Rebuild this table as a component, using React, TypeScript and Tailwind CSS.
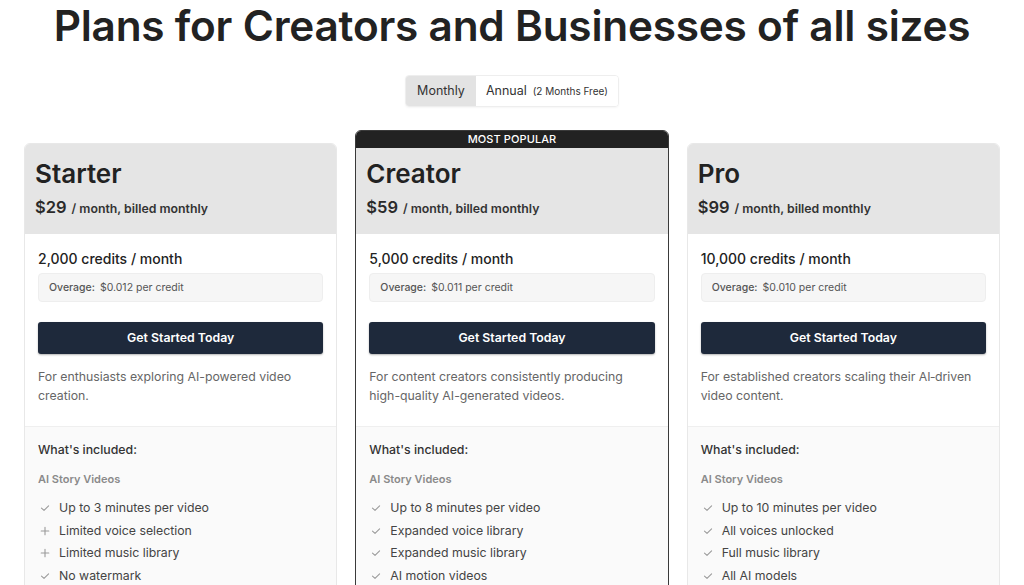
import React from "react";

type Feature = { text: string; icon: "check" | "plus" };
type Plan = {
  name: string;
  price: string;
  credits: string;
  overage: string;
  desc: string;
  features: Feature[];
  popular?: boolean;
};

const plans: Plan[] = [
  {
    name: "Starter",
    price: "$29",
    credits: "2,000 credits / month",
    overage: "$0.012 per credit",
    desc: "For enthusiasts exploring AI-powered video creation.",
    features: [
      { text: "Up to 3 minutes per video", icon: "check" },
      { text: "Limited voice selection", icon: "plus" },
      { text: "Limited music library", icon: "plus" },
      { text: "No watermark", icon: "check" },
    ],
  },
  {
    name: "Creator",
    price: "$59",
    credits: "5,000 credits / month",
    overage: "$0.011 per credit",
    desc: "For content creators consistently producing high-quality AI-generated videos.",
    popular: true,
    features: [
      { text: "Up to 8 minutes per video", icon: "check" },
      { text: "Expanded voice library", icon: "check" },
      { text: "Expanded music library", icon: "check" },
      { text: "AI motion videos", icon: "check" },
    ],
  },
  {
    name: "Pro",
    price: "$99",
    credits: "10,000 credits / month",
    overage: "$0.010 per credit",
    desc: "For established creators scaling their AI\u2011driven video content.",
    features: [
      { text: "Up to 10 minutes per video", icon: "check" },
      { text: "All voices unlocked", icon: "check" },
      { text: "Full music library", icon: "check" },
      { text: "All AI models", icon: "check" },
    ],
  },
];

function Icon({ kind }: { kind: "check" | "plus" }) {
  if (kind === "check") {
    return (
      <svg width="10" height="10" viewBox="0 0 10 10" className="shrink-0">
        <path d="M1.5 5.2 L4 7.4 L8.6 2.8" fill="none" stroke="#9a9a9a" strokeWidth="1.1" strokeLinecap="round" strokeLinejoin="round" />
      </svg>
    );
  }
  return (
    <svg width="10" height="10" viewBox="0 0 10 10" className="shrink-0">
      <path d="M5 1.2 V8.8 M1.2 5 H8.8" fill="none" stroke="#9a9a9a" strokeWidth="1.1" strokeLinecap="round" />
    </svg>
  );
}

function Card({ plan }: { plan: Plan }) {
  return (
    <div className={plan.popular ? "flex flex-col" : "flex flex-col pt-[13px]"}>
      <div
        className={
          plan.popular
            ? "flex flex-col rounded-t-[6px] border border-[#3a3a3a] overflow-hidden h-[460px]"
            : "flex flex-col rounded-t-[6px] border border-[#e8e8e8] overflow-hidden h-[447px]"
        }
      >
        {plan.popular && (
          <div className="h-[17px] bg-[#222222] text-white text-[11px] font-medium flex items-center justify-center tracking-[0.1px]">
            MOST POPULAR
          </div>
        )}
        <div
          className={
            plan.popular
              ? "bg-[#e5e5e5] h-[86px] px-[10px] pt-[10px]"
              : "bg-[#e5e5e5] h-[90px] px-[10px] pt-[14px]"
          }
        >
          <div className="text-[26px] leading-[32px] font-semibold text-[#222222]">{plan.name}</div>
          <div className="mt-[5px] flex items-baseline text-[#2a2a2a]">
            <span className="text-[16.5px] font-semibold">{plan.price}</span>
            <span className="ml-[5px] text-[12.3px] font-semibold text-[#333333]">/ month, billed monthly</span>
          </div>
        </div>
        <div className="bg-white px-[13px] pt-[16px] h-[193px] border-b border-[#efefef]">
          <div className="text-[14px] leading-[18px] font-medium text-[#222222]">{plan.credits}</div>
          <div className="mt-[5px] h-[29px] rounded-[4px] bg-[#f6f6f6] border border-[#eeeeee] flex items-center px-[10px] text-[10.5px] text-[#555555]">
            <span className="font-medium">Overage:</span>
            <span className="ml-[5px]">{plan.overage}</span>
          </div>
          <button className="mt-[20px] w-full h-[32px] rounded-[3px] bg-[#1e293b] text-white text-[12.3px] font-semibold shadow-[0_1px_2px_rgba(0,0,0,0.3)]">
            Get Started Today
          </button>
          <p className="mt-[13px] text-[12.3px] leading-[19px] text-[#666666]">{plan.desc}</p>
        </div>
        <div className="flex-1 bg-[#fafafa] px-[13px] pt-[15px]">
          <div className="text-[12.3px] font-medium text-[#333333] leading-[16px]">What's included:</div>
          <div className="mt-[14px] text-[11px] font-semibold text-[#8a8a8a] leading-[14px]">AI Story Videos</div>
          <ul className="mt-[11px] flex flex-col">
            {plan.features.map((f) => (
              <li key={f.text} className="flex items-center h-[22.5px] text-[12.3px] text-[#444444]">
                <span className="ml-[2px] w-[19px] flex"><Icon kind={f.icon} /></span>
                <span>{f.text}</span>
              </li>
            ))}
          </ul>
        </div>
      </div>
    </div>
  );
}

export default function App() {
  return (
    <div
      className="w-[1024px] h-[585px] overflow-hidden bg-white"
      style={{ fontFamily: "Inter, 'Noto Sans', sans-serif" }}
    >
      <h1 className="pt-[2px] text-center text-[42.3px] leading-[48px] font-semibold text-[#222222] tracking-[-0.2px]">
        Plans for Creators and Businesses of all sizes
      </h1>
      <div className="mt-[25px] flex justify-center">
        <div className="flex h-[32px] rounded-[4px] border border-[#eeeeee] overflow-hidden shadow-[0_1px_2px_rgba(0,0,0,0.04)]">
          <div className="bg-[#e3e3e3] px-[11px] flex items-center text-[12.5px] text-[#333333]">Monthly</div>
          <div className="bg-white px-[10px] flex items-center text-[12.5px] text-[#333333]">
            Annual
            <span className="ml-[6px] text-[10px]">(2 Months Free)</span>
          </div>
        </div>
      </div>
      <div className="mt-[23px] px-[24px] grid grid-cols-3 gap-[18px]">
        {plans.map((p) => (
          <Card key={p.name} plan={p} />
        ))}
      </div>
    </div>
  );
}
